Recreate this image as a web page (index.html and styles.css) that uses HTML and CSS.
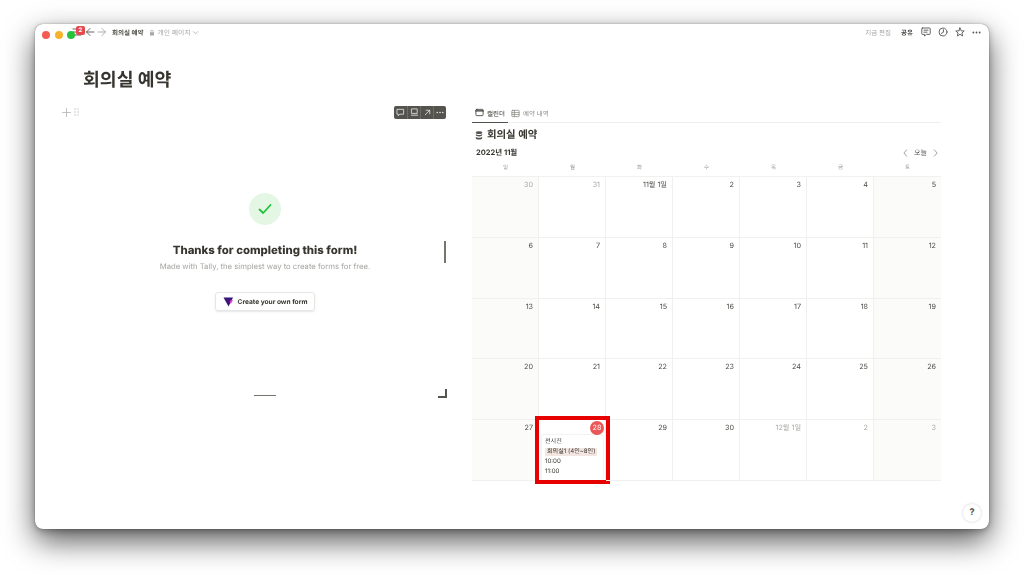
FILE: index.html
```html
<!DOCTYPE html>
<html lang="ko">
<head>
<meta charset="UTF-8" />
<meta name="viewport" content="width=device-width, initial-scale=1.0" />
<title>회의실 예약</title>
<link rel="stylesheet" href="styles.css">
</head>
<body>
  <div class="window">
    <!-- 신호등 버튼 -->
    <div class="lights">
      <span class="light red"></span>
      <span class="light yellow"></span>
      <span class="light green"></span>
    </div>
    <span class="alert-badge">2</span>

    <div class="topbar">
      <div class="topbar-left">
        <svg class="icon menu-icon" viewBox="0 0 10 8"><path d="M1 1h8M1 4h8M1 7h8"/></svg>
        <svg class="icon arrow-icon" viewBox="0 0 10 10"><path d="M9 5H1.5M5 1.5 1.5 5 5 8.5"/></svg>
        <svg class="icon arrow-icon faint" viewBox="0 0 10 10"><path d="M1 5h7.5M5 1.5 8.5 5 5 8.5"/></svg>
        <span class="crumb">회의실 예약</span>
        <svg class="lock-icon" viewBox="0 0 8 9"><path d="M2 4V2.8a2 2 0 0 1 4 0V4h.6v4.4H1.4V4zm.9 0h2.2V2.8a1.1 1.1 0 0 0-2.2 0z"/></svg>
        <span class="crumb-sub">개인 페이지</span>
        <svg class="icon chevron-icon" viewBox="0 0 8 8"><path d="M1.5 3 4 5.5 6.5 3"/></svg>
      </div>
      <div class="topbar-right">
        <span class="edited">지금 편집</span>
        <span class="share">공유</span>
        <svg class="icon bar-icon" viewBox="0 0 10 10"><path d="M1.5 1h7a.7.7 0 0 1 .7.7v5a.7.7 0 0 1-.7.7H5.5L3.5 9V7.4h-2a.7.7 0 0 1-.7-.7v-5a.7.7 0 0 1 .7-.7zM3 3.2h4M3 5.2h3"/></svg>
        <svg class="icon bar-icon" viewBox="0 0 10 10"><circle cx="5" cy="5" r="4"/><path d="M5.4 2.6V5.3L3.4 6.4"/></svg>
        <svg class="icon bar-icon" viewBox="0 0 10 10"><path d="M5 .9 6.2 3.8l3 .2-2.3 2 .8 3L5 7.4 2.3 9l.8-3L.8 4l3-.2z"/></svg>
        <svg class="dots-icon" viewBox="0 0 10 3"><circle cx="1.5" cy="1.5" r="1"/><circle cx="5" cy="1.5" r="1"/><circle cx="8.5" cy="1.5" r="1"/></svg>
      </div>
    </div>

    <div class="page">
      <h1 class="page-title">회의실 예약</h1>

      <div class="columns">
        <div class="left-col">
          <div class="gutter">
            <svg class="icon plus-icon" viewBox="0 0 9 9"><path d="M4.5 .5v8M.5 4.5h8"/></svg>
            <svg class="grip-icon" viewBox="0 0 5 8"><circle cx="1" cy="1" r=".7"/><circle cx="4" cy="1" r=".7"/><circle cx="1" cy="4" r=".7"/><circle cx="4" cy="4" r=".7"/><circle cx="1" cy="7" r=".7"/><circle cx="4" cy="7" r=".7"/></svg>
          </div>
          <div class="embed">
            <div class="embed-tools">
              <span class="tool"><svg class="icon" viewBox="0 0 10 10"><path d="M1.5 1.5h7v5.4H4.2L2.6 8.6V6.9H1.5z"/></svg></span>
              <span class="tool"><svg class="icon" viewBox="0 0 10 10"><path d="M2 1h6v5H2zM1.5 8h7"/></svg></span>
              <span class="tool"><svg class="icon" viewBox="0 0 10 10"><path d="M2.5 7.5 7.5 2.5M3.5 2.5h4v4"/></svg></span>
              <span class="tool"><svg class="tool-dots" viewBox="0 0 10 3"><circle cx="1.5" cy="1.5" r="1"/><circle cx="5" cy="1.5" r="1"/><circle cx="8.5" cy="1.5" r="1"/></svg></span>
            </div>

            <div class="done-mark">
              <svg viewBox="0 0 14 12"><path d="M1.5 6.5 5.2 10 12.5 2"/></svg>
            </div>
            <h2 class="done-title">Thanks for completing this form!</h2>
            <p class="done-sub">Made with Tally, the simplest way to create forms for free.</p>
            <div class="own-form">
              <svg class="tally-logo" viewBox="0 0 12 11"><path fill="#3b1578" d="M.5.5h10.5L6 10.5z"/><path fill="#e23ad6" d="M7.4 4.2 11 3.4 8.4 7.6 7.8 6z"/></svg>
              Create your own form
            </div>

            <span class="handle-right"></span>
            <span class="handle-bottom"></span>
            <span class="handle-corner"></span>
          </div>
        </div>

        <div class="right-col">
          <div class="tabs">
            <span class="tab active">
              <svg class="icon tab-icon" viewBox="0 0 10 10"><rect x="1" y="1.5" width="8" height="7" rx="1"/><path class="thick" d="M1 3.2h8"/></svg>
              캘린더
            </span>
            <span class="tab">
              <svg class="icon tab-icon" viewBox="0 0 10 10"><rect x="1" y="1.5" width="8" height="7" rx=".6"/><path d="M1 4h8M1 6.2h8M3.8 1.5v7"/></svg>
              예약 내역
            </span>
          </div>

          <h3 class="db-title">
            <svg class="db-icon" viewBox="0 0 8 9"><ellipse cx="4" cy="1.7" rx="3.2" ry="1.4"/><path d="M.8 3v1.1c0 .8 1.4 1.4 3.2 1.4s3.2-.6 3.2-1.4V3c-.6.7-1.8 1.1-3.2 1.1S1.400 3.700.8 3zM.8 5.700v1.500C.8 8 2.200 8.600 4 8.600s3.200-.6 3.200-1.400V5.700c-.6.700-1.800 1.100-3.200 1.100S1.400 6.400.8 5.700z"/></svg>
            회의실 예약
          </h3>

          <div class="month-row">
            <span class="month">2022년 11월</span>
            <div class="month-nav">
              <svg class="icon nav-icon" viewBox="0 0 6 10"><path d="M4.500 1 1 5l3.500 4"/></svg>
              <span>오늘</span>
              <svg class="icon nav-icon" viewBox="0 0 6 10"><path d="M1.500 1 5 5 1.500 9"/></svg>
            </div>
          </div>

          <div class="weekdays">
            <span>일</span><span>월</span><span>화</span><span>수</span><span>목</span><span>금</span><span>토</span>
          </div>

          <div class="calendar">
            <div class="day weekend muted">30</div>
            <div class="day muted">31</div>
            <div class="day">11월 1일</div>
            <div class="day">2</div>
            <div class="day">3</div>
            <div class="day">4</div>
            <div class="day weekend">5</div>

            <div class="day weekend">6</div>
            <div class="day">7</div>
            <div class="day">8</div>
            <div class="day">9</div>
            <div class="day">10</div>
            <div class="day">11</div>
            <div class="day weekend">12</div>

            <div class="day weekend">13</div>
            <div class="day">14</div>
            <div class="day">15</div>
            <div class="day">16</div>
            <div class="day">17</div>
            <div class="day">18</div>
            <div class="day weekend">19</div>

            <div class="day weekend">20</div>
            <div class="day">21</div>
            <div class="day">22</div>
            <div class="day">23</div>
            <div class="day">24</div>
            <div class="day">25</div>
            <div class="day weekend">26</div>

            <div class="day weekend">27</div>
            <div class="day today-cell">
              <span class="today">28</span>
              <div class="event">
                <div class="event-line">전시진</div>
                <span class="event-tag">회의실1 (4인~8인)</span>
                <div class="event-line">10:00</div>
                <div class="event-line">11:00</div>
              </div>
              <span class="highlight"></span>
            </div>
            <div class="day">29</div>
            <div class="day">30</div>
            <div class="day muted">12월 1일</div>
            <div class="day muted">2</div>
            <div class="day weekend muted">3</div>
          </div>
        </div>
      </div>
    </div>

    <span class="help">?</span>
  </div>
</body>
</html>
```

FILE: styles.css
```css
* {
  box-sizing: border-box;
}
html, body {
  height: 100%;
}
body {
  margin: 0;
  padding: 24px 35px 46px;
  background: #fff;
  color: #37352f;
  font-family: "Inter", "Noto Sans CJK KR", sans-serif;
  text-rendering: geometricPrecision;
  overflow: hidden;
}
.window {
  position: relative;
  width: 954px;
  height: 505px;
  background: #fff;
  border-radius: 8px;
  box-shadow: 0 0 1px rgba(0, 0, 0, 0.6), 0 2px 6px rgba(0, 0, 0, 0.25), 0 12px 30px rgba(0, 0, 0, 0.65);
}
.icon {
  fill: none;
  stroke: currentColor;
  stroke-width: 0.9;
  stroke-linecap: round;
  stroke-linejoin: round;
}

/* traffic lights */
.lights {
  position: absolute;
  left: 7px;
  top: 7px;
  display: flex;
  gap: 4.500px;
  z-index: 2;
}
.light {
  width: 8px;
  height: 8px;
  border-radius: 50%;
}
.red { background: #f45c54; }
.yellow { background: #f8b32c; }
.green { background: #27c23c; }
.alert-badge {
  position: absolute;
  left: 41px;
  top: 2px;
  width: 9px;
  height: 9px;
  border-radius: 2px;
  background: #e5484d;
  color: #fff;
  font-size: 6px;
  font-weight: 700;
  line-height: 9px;
  text-align: center;
  z-index: 3;
}

/* top bar */
.topbar {
  height: 16px;
  display: flex;
  justify-content: space-between;
  align-items: center;
  padding: 0 8px 0 37px;
  will-change: transform;
}
.topbar-left, .topbar-right {
  display: flex;
  align-items: center;
}
.menu-icon {
  width: 10px;
  height: 8px;
  color: #55534e;
  margin-right: 3px;
}
.arrow-icon {
  width: 10px;
  height: 10px;
  color: #55534e;
  margin-right: 2px;
}
.arrow-icon.faint {
  color: #a8a7a3;
  margin-right: 5px;
}
.crumb {
  font-size: 6.500px;
  font-weight: 700;
  color: #4a4944;
  margin-right: 6px;
}
.lock-icon {
  width: 6px;
  height: 7px;
  fill: #a8a7a3;
  margin-right: 2px;
}
.crumb-sub {
  font-size: 6.800px;
  color: #a8a7a3;
}
.chevron-icon {
  width: 7px;
  height: 7px;
  color: #a8a7a3;
  margin-left: 1px;
}
.edited {
  font-size: 6.500px;
  color: #a8a7a3;
  margin-right: 10px;
}
.share {
  font-size: 6.500px;
  font-weight: 700;
  color: #4a4944;
  margin-right: 8px;
}
.bar-icon {
  width: 10px;
  height: 10px;
  color: #55534e;
  margin-right: 7px;
}
.dots-icon {
  width: 9px;
  height: 3px;
  fill: #55534e;
}

/* page */
.page {
  padding: 28px 48px 0 27px;
  will-change: transform;
}
.page-title {
  margin: 0 0 14px 21px;
  font-size: 18.300px;
  font-weight: 700;
  line-height: 24px;
  color: #37352f;
}
.columns {
  display: flex;
  gap: 25px;
}
.left-col {
  width: 385px;
  display: flex;
}
.gutter {
  width: 21px;
  height: 12px;
  display: flex;
  align-items: center;
  gap: 3px;
}
.plus-icon {
  width: 9px;
  height: 9px;
  color: #b4b3af;
  stroke-width: 0.8;
}
.grip-icon {
  width: 5px;
  height: 8px;
  fill: #bdbcb8;
}
.embed {
  position: relative;
  flex: 1;
  height: 292px;
  padding-top: 87px;
  display: flex;
  flex-direction: column;
  align-items: center;
}
.embed-tools {
  position: absolute;
  top: 0;
  right: 1px;
  display: flex;
  height: 13px;
  background: #55534e;
  border-radius: 2px;
}
.tool {
  width: 13px;
  display: flex;
  align-items: center;
  justify-content: center;
  color: #e8e8e6;
  border-left: 1px solid #6f6d68;
}
.tool:first-child {
  border-left: none;
}
.tool .icon {
  width: 9px;
  height: 9px;
}
.tool-dots {
  width: 8px;
  height: 3px;
  fill: #e8e8e6;
}
.done-mark {
  width: 32px;
  height: 32px;
  border-radius: 50%;
  background: #e3f7e4;
  display: flex;
  align-items: center;
  justify-content: center;
}
.done-mark svg {
  width: 14px;
  height: 12px;
  fill: none;
  stroke: #22c03c;
  stroke-width: 1.800;
  stroke-linecap: round;
  stroke-linejoin: round;
}
.done-title {
  margin: 17px 0 0;
  font-size: 11.400px;
  font-weight: 800;
  line-height: 16px;
  color: #37352f;
}
.done-sub {
  margin: 3px 0 0;
  font-size: 7.700px;
  line-height: 12px;
  color: #a5a4a1;
}
.own-form {
  margin-top: 19px;
  width: 100px;
  height: 19px;
  border: 1px solid #e6e6e4;
  border-radius: 3px;
  box-shadow: 0 1px 2px rgba(0, 0, 0, 0.1);
  display: flex;
  align-items: center;
  justify-content: center;
  gap: 4px;
  font-size: 6.600px;
  font-weight: 700;
  color: #37352f;
  white-space: nowrap;
}
.tally-logo {
  width: 11px;
  height: 10px;
}
.handle-right {
  position: absolute;
  right: 1px;
  top: 135px;
  width: 2px;
  height: 22px;
  background: #77756f;
}
.handle-bottom {
  position: absolute;
  left: 171px;
  bottom: 2px;
  width: 22px;
  height: 1px;
  background: #77756f;
}
.handle-corner {
  position: absolute;
  right: 0;
  bottom: 0;
  width: 9px;
  height: 9px;
  border-right: 2px solid #55534e;
  border-bottom: 2px solid #55534e;
}

/* database */
.right-col {
  width: 469px;
}
.tabs {
  height: 17px;
  display: flex;
  align-items: flex-start;
  border-bottom: 1px solid #eeeeec;
}
.tab {
  height: 17px;
  padding: 0 3px 3px;
  display: flex;
  align-items: center;
  gap: 3px;
  font-size: 6.500px;
  color: #8f8e8a;
}
.tab.active {
  color: #37352f;
  border-bottom: 1px solid #55534e;
  width: 36px;
}
.tab-icon {
  width: 9px;
  height: 9px;
}
.tab-icon .thick {
  stroke-width: 1.600;
}
.db-title {
  margin: 5px 0 0 3px;
  display: flex;
  align-items: center;
  gap: 4px;
  font-size: 10.400px;
  font-weight: 700;
  line-height: 14px;
}
.db-icon {
  width: 8px;
  height: 9px;
  fill: #55534e;
}
.month-row {
  margin-top: 4px;
  height: 12px;
  padding: 0 3px 0 4px;
  display: flex;
  justify-content: space-between;
  align-items: center;
}
.month {
  font-size: 7.500px;
  font-weight: 700;
}
.month-nav {
  margin-top: 1px;
  display: flex;
  align-items: center;
  gap: 6px;
  font-size: 7px;
  color: #55534e;
}
.nav-icon {
  width: 5px;
  height: 8px;
  color: #807f7a;
}
.weekdays {
  display: grid;
  grid-template-columns: repeat(7, 1fr);
  height: 18px;
  align-items: center;
  text-align: center;
  font-size: 5.500px;
  color: #999894;
}
.calendar {
  display: grid;
  grid-template-columns: repeat(7, 67px);
  grid-template-rows: repeat(5, 60.800px);
  border-top: 1px solid #f1f1ef;
}
.day {
  position: relative;
  padding: 3px 5px 0 0;
  text-align: right;
  font-size: 7.200px;
  line-height: 10px;
  color: #4a4944;
  border-right: 1px solid #f0f0ee;
  border-bottom: 1px solid #f0f0ee;
}
.day:nth-child(7n) {
  border-right: none;
}
.weekend {
  background: #fbfbfa;
}
.muted {
  color: #a8a7a3;
}
.today-cell {
  padding-right: 0;
}
.today {
  position: absolute;
  top: 1px;
  right: 1px;
  width: 14px;
  height: 14px;
  border-radius: 50%;
  background: #eb5757;
  color: #fff;
  line-height: 14px;
  text-align: center;
}
.event {
  position: absolute;
  left: 3px;
  top: 15px;
  width: 61px;
  height: 45px;
  padding: 2px 3px;
  background: #fff;
  border-radius: 2px;
  box-shadow: 0 0 2px rgba(0, 0, 0, 0.18);
  text-align: left;
  font-size: 6.100px;
  color: #37352f;
}
.event-line {
  height: 10px;
  line-height: 10px;
}
.event-tag {
  display: block;
  width: 52px;
  height: 8px;
  margin: 1px 0;
  line-height: 8px;
  padding-left: 2px;
  border-radius: 1px;
  background: #f3e5df;
  white-space: nowrap;
}
.highlight {
  position: absolute;
  left: -4px;
  top: -4px;
  width: 75px;
  height: 68px;
  border: 4px solid #e60000;
  pointer-events: none;
}

.help {
  position: absolute;
  right: 8px;
  bottom: 7px;
  width: 18px;
  height: 18px;
  border-radius: 50%;
  background: #fff;
  box-shadow: 0 0 3px rgba(0, 0, 0, 0.2);
  font-size: 9px;
  font-weight: 700;
  line-height: 18px;
  text-align: center;
  color: #55534e;
}
```
